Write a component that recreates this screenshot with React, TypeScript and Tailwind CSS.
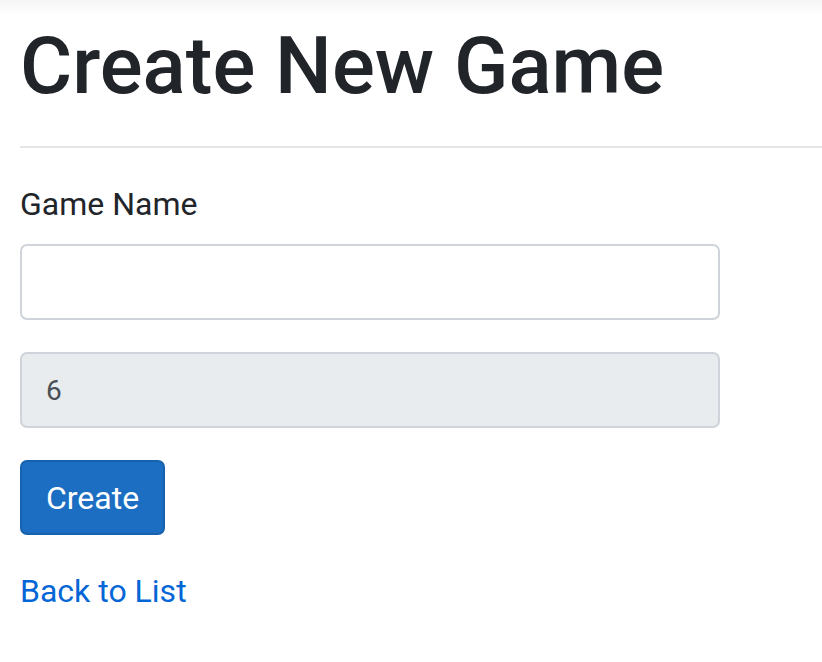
import { FC } from 'react';

const App: FC = () => (
  <div className="min-h-[662px] bg-white font-['Roboto','Liberation_Sans',sans-serif] text-[#212529]">
    <div className="h-[14px] bg-gradient-to-b from-[#f5f5f5] to-white" />
    <div className="pl-5">
      <h1 className="mt-[4px] text-[80px] font-medium leading-[1.2]">Create New Game</h1>
      <hr className="mt-[32px] border-t-2 border-[#e5e5e5]" />
      <form className="w-[700px] pt-[32px]" onSubmit={(e) => e.preventDefault()}>
        <label htmlFor="name" className="block text-[32px] leading-[48px]">
          Game Name
        </label>
        <input
          id="name"
          type="text"
          className="mt-[16px] block h-[76px] w-full rounded-[7px] border-2 border-[#ced4da] bg-white px-6 text-[28px] outline-none"
        />
        <input
          type="text"
          value="6"
          readOnly
          className="mt-[32px] block h-[76px] w-full rounded-[7px] border-2 border-[#ced4da] bg-[#e9ecef] px-6 text-[28px] text-[#495057] outline-none"
        />
        <button
          type="submit"
          className="mt-[32px] h-[75px] w-[145px] rounded-[7px] border-2 border-[#1861ac] bg-[#1b6ec2] text-[32px] text-white"
        >
          Create
        </button>
      </form>
      <div className="mt-[32px] text-[32px] leading-[48px]">
        <a href="#" className="text-[#0366d6]">
          Back to List
        </a>
      </div>
    </div>
  </div>
);

export default App;
